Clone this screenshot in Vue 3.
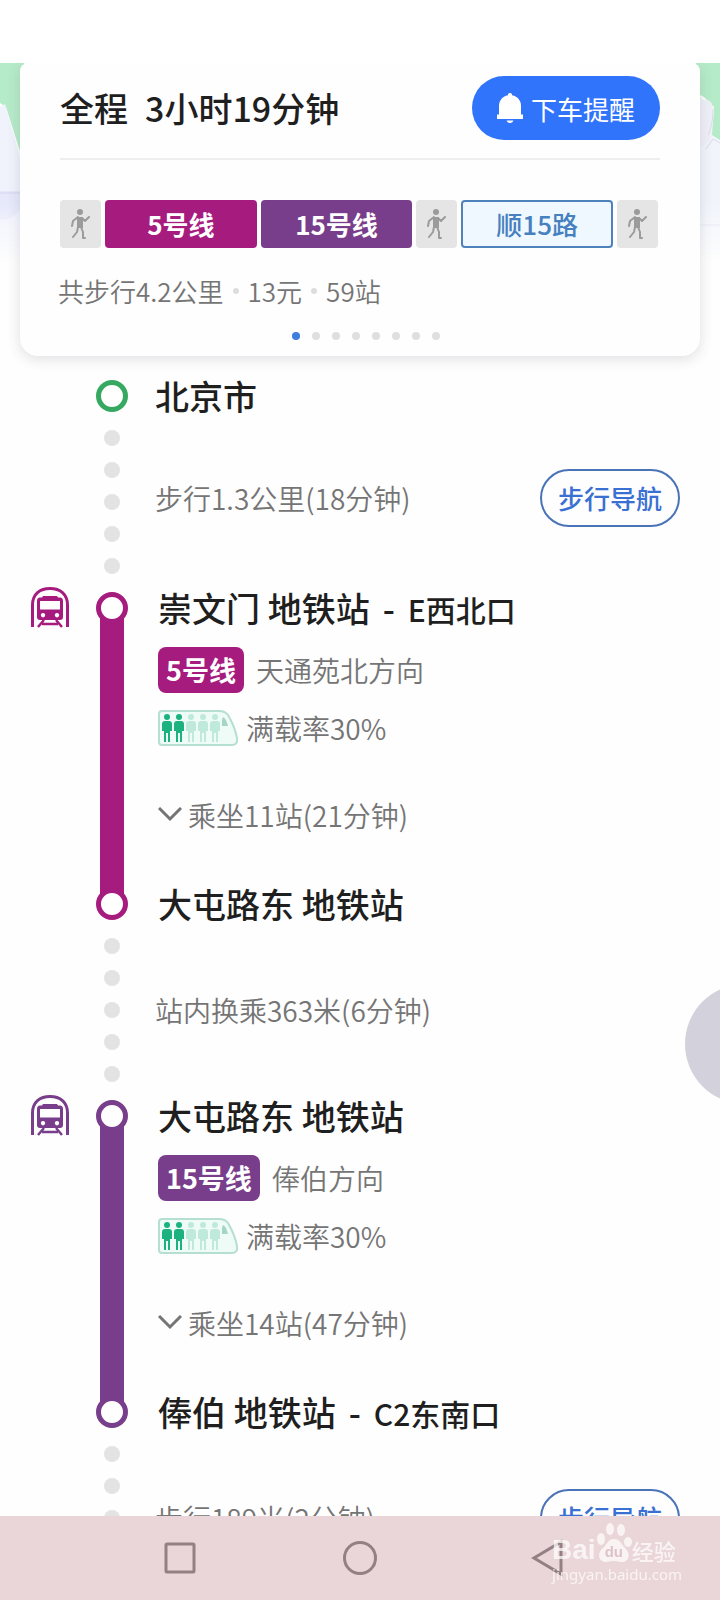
<script setup>
const segments = [
  { kind: 'walk' },
  { kind: 'metro5', label: '5号线' },
  { kind: 'metro15', label: '15号线' },
  { kind: 'walk' },
  { kind: 'bus', label: '顺15路' },
  { kind: 'walk' },
]

const legs = [
  { type: 'walk', text: '步行1.3公里(18分钟)', nav: true, first: true },
  {
    type: 'ride', line: 'metro5', name: '5号线', direction: '天通苑北方向', load: '满载率30%',
    stops: '乘坐11站(21分钟)', from: '崇文门 地铁站', fromExit: 'E西北口', to: '大屯路东 地铁站',
  },
  { type: 'walk', text: '站内换乘363米(6分钟)', nav: false },
  {
    type: 'ride', line: 'metro15', name: '15号线', direction: '俸伯方向', load: '满载率30%',
    stops: '乘坐14站(47分钟)', from: '大屯路东 地铁站', to: '俸伯 地铁站', toExit: 'C2东南口',
  },
  { type: 'walk', text: '步行189米(2分钟)', nav: true },
]

const people = [9, 21, 33, 45, 57]
</script>

<template>
  <div class="page">
    <div class="status"></div>
    <header class="top">
      <svg class="map map-left" viewBox="0 0 24 200" aria-hidden="true">
        <path fill="#b6ebc9" d="M0 0H24V100L18 82L6 44L0 40Z" />
        <path fill="#f0f2fc" d="M0 44L5 41L12 66L24 108V200H0Z" />
        <path fill="none" stroke="#dcdff5" stroke-width="3" d="M0 130H24" />
        <path fill="#e6e9fa" d="M0 132H24V142Q12 160 0 156Z" />
      </svg>
      <svg class="map map-right" viewBox="0 0 24 200" aria-hidden="true">
        <path fill="#f1f4fb" d="M0 60H24V200H0Z" />
        <path fill="#b6ebc9" d="M0 0H24V77L16 72L18 44L8 34L0 30Z" />
        <path fill="#eff0f7" d="M0 26Q6 40 12 37Q19 40 17 56L14 78L0 86Z" />
        <path fill="none" stroke="#dadde8" stroke-width="1" d="M17 46Q17 62 12 72M10 86L17 76L24 80" />
        <path fill="none" stroke="#e6eaf5" stroke-width="2" d="M0 162H24" />
      </svg>
      <section class="card">
        <div class="summary">
          <h1>全程&ensp;3小时19分钟</h1>
          <button class="remind" type="button">
            <svg width="26" height="30" viewBox="0 0 26 30" aria-hidden="true">
              <path fill="#fff" d="M13 0a2 2 0 0 1 2 2.300C21 3.500 24 8 24 13V21.500H26V26H0V21.500H2V13C2 8 5 3.500 11 2.300A2 2 0 0 1 13 0ZM9.500 27.500H16.500Q15.500 30 13 30T9.500 27.500Z" />
            </svg>
            下车提醒
          </button>
        </div>
        <div class="segments">
          <div v-for="(s, i) in segments" :key="i" class="segment" :class="s.kind">
            <template v-if="s.label">{{ s.label }}</template>
            <svg v-else width="20" height="32" viewBox="0 0 20 32" aria-hidden="true">
              <circle cx="9" cy="4" r="3" fill="#9b9b9b" />
              <path fill="#9b9b9b" d="M6 9H12V20H6Z" />
              <path fill="none" stroke="#9b9b9b" stroke-width="2" stroke-linecap="round" stroke-linejoin="round" d="M7 9L2 13L1 18M11 10L14 13L18 9M7 19L6 24L2 29M10 19L12 24V30M12 30H14" />
            </svg>
          </div>
        </div>
        <p class="stats">共步行4.2公里<i></i>13元<i></i>59站</p>
        <div class="pager"><span v-for="n in 8" :key="n" :class="{ on: n === 1 }"></span></div>
      </section>
    </header>

    <main class="route">
      <div class="origin">
        <span class="ring start"></span>
        <h2>北京市</h2>
      </div>
      <template v-for="(leg, i) in legs" :key="i">
        <div v-if="leg.type === 'walk'" class="leg walk-leg" :class="{ first: leg.first }">
          <div class="dots"><span v-for="n in 5" :key="n"></span></div>
          <div class="walk-body">
            <span class="grey">{{ leg.text }}</span>
            <button v-if="leg.nav" class="nav-btn" type="button">步行导航</button>
          </div>
        </div>
        <div v-else class="leg" :class="leg.line">
          <svg class="train" width="38" height="41" viewBox="0 0 38 41" aria-hidden="true">
            <path fill="none" stroke="currentColor" stroke-width="3" d="M1.500 40V18C1.500 7 9 1.500 19 1.500S36.500 7 36.500 18V40" />
            <path fill="currentColor" fill-rule="evenodd" d="M12 9H26L27 10.500H29Q32 10.500 32 14V30Q32 33 29 33H9Q6 33 6 30V14Q6 10.500 9 10.500H11ZM9 14V22.500H29V14ZM12 26a2.200 2.200 0 1 0 .01 0ZM26 26a2.200 2.200 0 1 0 .01 0Z" />
            <path fill="none" stroke="currentColor" stroke-width="2.500" d="M13 33L7 40M25 33L31 40M11 37H27" />
          </svg>
          <div class="track">
            <span class="ring"></span>
            <span class="bar"></span>
            <span class="ring"></span>
          </div>
          <div class="ride-body">
            <h2>{{ leg.from }}<template v-if="leg.fromExit"><b>-</b><small>{{ leg.fromExit }}</small></template></h2>
            <div class="line-row"><span class="badge">{{ leg.name }}</span><span class="grey">{{ leg.direction }}</span></div>
            <div class="load-row">
              <svg width="80" height="36" viewBox="0 0 80 36" aria-hidden="true">
                <path fill="#effbf6" stroke="#b5dfd0" stroke-width="2" d="M4 1H61Q67 1 70 5Q77 17 79 28Q80 35 74 35H4Q1 35 1 32V4Q1 1 4 1Z" />
                <g v-for="(x, k) in people" :key="x" :fill="k < 2 ? '#1cb27f' : '#bfeadb'">
                  <circle :cx="x" cy="7" r="3" />
                  <path :d="`M${x - 2} 11H${x + 2}Q${x + 5} 11 ${x + 5} 14V21H${x + 3}V32H${x + 1}V23H${x - 1}V32H${x - 3}V21H${x - 5}V14Q${x - 5} 11 ${x - 2} 11Z`" />
                </g>
                <path fill="#a5d6c5" d="M65 7Q68 8 70 16H64V10Z" />
              </svg>
              <span class="grey">{{ leg.load }}</span>
            </div>
            <button class="stops" type="button">
              <svg width="24" height="16" viewBox="0 0 24 16" aria-hidden="true"><path fill="none" stroke="#757575" stroke-width="3" d="M1 1L12 12L23 1" /></svg>
              <span class="grey">{{ leg.stops }}</span>
            </button>
            <h2>{{ leg.to }}<template v-if="leg.toExit"><b>-</b><small>{{ leg.toExit }}</small></template></h2>
          </div>
        </div>
      </template>
    </main>

    <button class="floating" type="button" aria-label="悬浮球"></button>

    <nav class="system">
      <button type="button" aria-label="最近任务"><svg width="36" height="36" viewBox="0 0 36 36"><rect x="4" y="4" width="28" height="28" rx="1" /></svg></button>
      <button type="button" aria-label="主屏幕"><svg width="36" height="36" viewBox="0 0 36 36"><circle cx="18" cy="18" r="15.500" /></svg></button>
      <button type="button" aria-label="返回"><svg width="36" height="36" viewBox="0 0 36 36"><path d="M39 2V34L12 18Z" /></svg></button>
      <div class="watermark">
        <div class="brand">
          <span class="bai">Bai</span>
          <span class="paw">
            <svg width="36" height="42" viewBox="0 0 36 42" aria-hidden="true">
              <g fill="#fff">
                <ellipse cx="5" cy="17" rx="4" ry="6" />
                <ellipse cx="14" cy="7" rx="4" ry="6" />
                <ellipse cx="25" cy="8" rx="4" ry="6" />
                <ellipse cx="32" cy="20" rx="4" ry="5" />
                <path d="M18 17C24 17 25 22 29 26C36 33 32 41 25 40Q18 38 11 40C4 41 0 33 6 27C11 23 12 17 18 17Z" />
              </g>
            </svg>
            <span class="du">du</span>
          </span>
          <span class="exp">经验</span>
        </div>
        <span class="url">jingyan.baidu.com</span>
      </div>
    </nav>
  </div>
</template>

<style>
body {
  margin: 0;
  background: #fff;
}
</style>

<style scoped>
.page {
  position: relative;
  display: flex;
  flex-direction: column;
  height: 100vh;
  overflow: hidden;
  background: #fefefe;
  color: #1f1f1f;
  font-family: "Noto Sans CJK SC", "Noto Sans", sans-serif;
}
button {
  margin: 0;
  padding: 0;
  border: 0;
  background: none;
  font-family: inherit;
  color: inherit;
  cursor: pointer;
}
h1, h2, p { margin: 0; }
h1, h2 { height: 32px; font-size: 34px; line-height: 32px; font-weight: 500; white-space: pre; }
svg { display: block; flex: none; }
.status { flex: none; height: 63px; background: #fff; }
.top { position: relative; flex: none; padding: 0 20px; }
.map {
  position: absolute;
  top: 0;
  width: 24px;
  height: 200px;
  mask-image: linear-gradient(#000 70%, transparent);
}
.map-left { left: 0; }
.map-right { right: 0; }
.card {
  position: relative;
  padding: 13px 40px 16px;
  border-radius: 8px 8px 18px 18px;
  background: #fefefe;
  box-shadow: 0 3px 14px rgba(60, 60, 80, 0.16);
  clip-path: inset(0 -20px -20px -20px);
}
.summary {
  display: flex;
  align-items: center;
  justify-content: space-between;
  padding-bottom: 18px;
  border-bottom: 2px solid #eee;
}
.remind {
  display: flex;
  align-items: center;
  justify-content: center;
  gap: 8px;
  width: 188px;
  height: 64px;
  border-radius: 32px;
  background: #3074fc;
  color: #fff;
  font-size: 26px;
}
.segments { display: flex; gap: 4px; margin-top: 40px; padding-right: 2px; }
.segment {
  display: flex;
  align-items: center;
  justify-content: center;
  flex: 1;
  height: 48px;
  border-radius: 4px;
  color: #fff;
  font-size: 26px;
  line-height: 48px;
  font-weight: 700;
}
.segment.walk { flex: 0 0 41px; background: #e5e5e5; }
.segment.metro5 { background: #a61b7e; }
.segment.metro15 { background: #783e8b; }
.segment.bus { box-shadow: inset 0 0 0 2px #4f82bb; background: #eff8fe; color: #4680bf; font-weight: 500; }
.stats {
  display: flex;
  align-items: center;
  margin: 25px 0 0 -2px;
  color: #757575;
  font-size: 26px;
  font-weight: 350;
  line-height: 36px;
}
.stats i { width: 6px; height: 6px; margin: 0 9px; border-radius: 50%; background: #ddd; }
.pager { display: flex; justify-content: center; gap: 12px; margin-top: 23px; padding-left: 12px; }
.pager span { width: 8px; height: 8px; border-radius: 50%; background: #dfdfdf; }
.pager .on { background: #3f7fdc; }

.route { flex: 1; min-height: 0; overflow: hidden; padding: 24px 40px 0 31px; }
.origin { display: flex; align-items: center; gap: 27px; padding-left: 65px; }
.ring {
  flex: none;
  box-sizing: border-box;
  width: 32px;
  height: 32px;
  border: 5px solid currentColor;
  border-radius: 50%;
  background: #fff;
}
.start { color: #35a960; }
.leg { display: grid; grid-template-columns: 38px 32px 1fr; column-gap: 27px; }
.leg.metro5 { color: #a61b7e; }
.leg.metro15 { color: #783e8b; }
.walk-leg { grid-template-columns: 32px 1fr; padding-left: 65px; min-height: 180px; }
.dots { display: flex; flex-direction: column; align-items: center; justify-content: center; gap: 16px; }
.dots span { width: 16px; height: 16px; border-radius: 50%; background: #e3e3e3; }
.walk-body { display: flex; align-items: center; justify-content: space-between; }
.first .walk-body { padding-bottom: 8px; }
.grey { color: #757575; font-size: 28px; line-height: 36px; font-weight: 350; white-space: nowrap; }
.nav-btn {
  box-sizing: border-box;
  width: 140px;
  height: 58px;
  border: 2px solid #4a73b8;
  border-radius: 29px;
  color: #3a70d2;
  font-size: 26px;
  line-height: 52px;
  font-weight: 500;
}
.train { margin-top: -5px; }
.track { display: flex; flex-direction: column; align-items: center; }
.bar { flex: 1; width: 24px; margin: -8px 0; background: currentColor; }
.track .ring { position: relative; z-index: 1; }
.ride-body { padding-left: 3px; }
.ride-body h2 { color: #1f1f1f; }
h2 b { margin: 0 13px; font-weight: 500; }
h2 small { font-size: 30px; }
.line-row { display: flex; align-items: center; gap: 12px; margin-top: 23px; }
.badge {
  height: 46px;
  padding: 0 8px;
  border-radius: 8px;
  font-size: 27px;
  line-height: 46px;
  font-weight: 700;
}
.metro5 .badge { background: #a61b7e; color: #fff; }
.metro15 .badge { background: #783e8b; color: #fff; }
.load-row { display: flex; align-items: center; gap: 8px; margin-top: 17px; }
.stops { display: flex; align-items: center; gap: 6px; margin: 51px 0 55px; }

.floating {
  position: absolute;
  top: 984px;
  right: -85px;
  width: 120px;
  height: 120px;
  border-radius: 50%;
  background: #d3d2dc;
}
.system {
  position: relative;
  flex: none;
  display: grid;
  grid-template-columns: repeat(3, 1fr);
  align-items: center;
  justify-items: center;
  height: 84px;
  padding: 0 90px;
  background: #ead6d9;
}
.system button { width: 36px; }
.system button svg { overflow: visible; fill: none; stroke: #948084; stroke-width: 3; }
.watermark { position: absolute; right: 38px; bottom: 16px; color: #fff; opacity: 0.72; }
.brand { display: flex; align-items: flex-end; }
.bai { font: 700 28px/28px "Liberation Sans", sans-serif; }
.paw { position: relative; }
.du {
  position: absolute;
  left: 9px;
  bottom: 3px;
  color: #d9bcc2;
  font: 700 15px/18px "Liberation Sans", sans-serif;
}
.exp { font-size: 22px; line-height: 28px; font-weight: 500; }
.url { display: block; font: 15px/20px "Noto Sans", sans-serif; }
</style>
